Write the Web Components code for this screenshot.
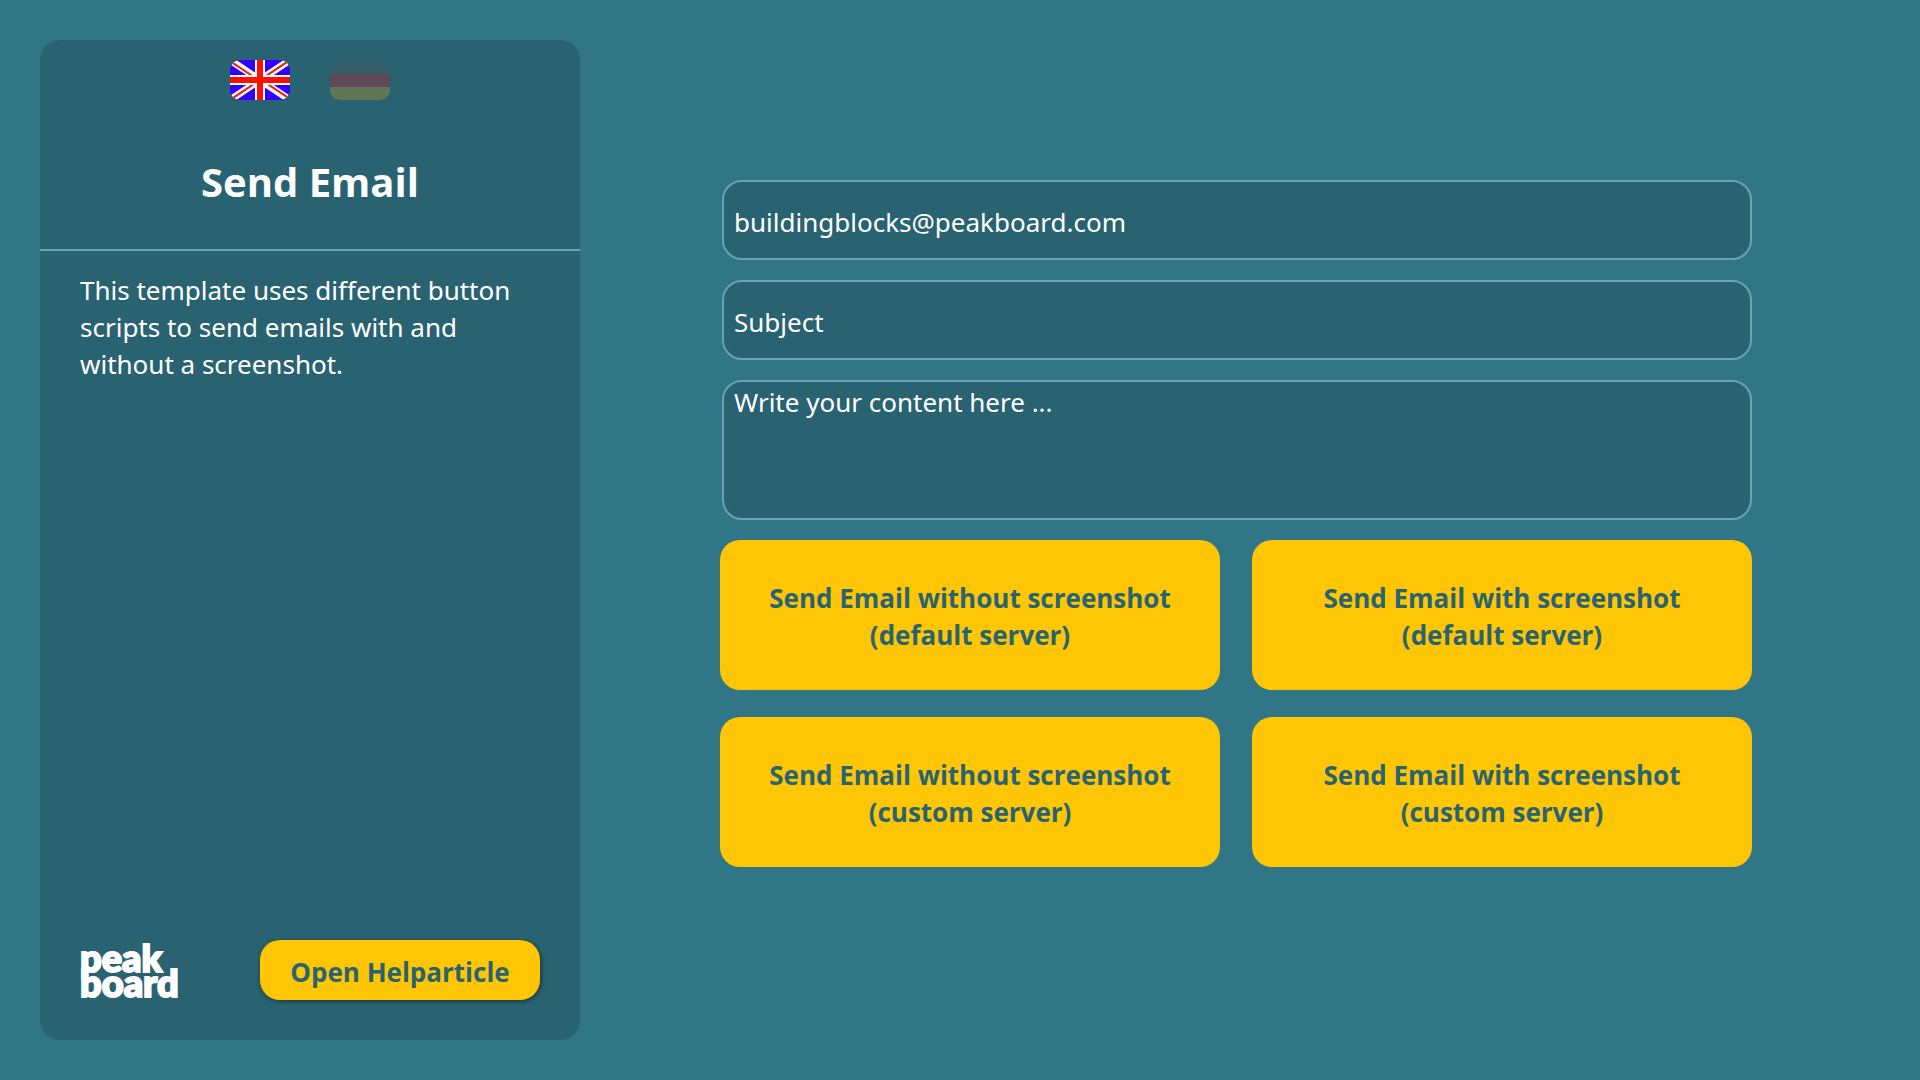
<!DOCTYPE html>
<html lang="en">
<head>
<meta charset="utf-8">
<title>Send Email</title>
<style>
  :root {
    --page: #317686;
    --surface: #296371;
    --line: #66a3b3;
    --accent: #ffc605;
    --radius: 20px;
    --text: 26px;
    --leading: 37px;
    --copy: "Noto Sans", "Open Sans", sans-serif;
  }
  * { box-sizing: border-box; }
  body {
    margin: 0;
    min-height: 100vh;
    display: flex;
    background: var(--page);
    color: #fff;
    font-family: "Open Sans", "Noto Sans", sans-serif;
    font-size: var(--text);
    line-height: var(--leading);
  }
</style>
</head>
<body>
<email-app></email-app>

<script>
const define = (name, html, setup) => {
  const template = document.createElement('template');
  template.innerHTML = '<style>*{box-sizing:border-box}</style>' + html;
  customElements.define(name, class extends HTMLElement {
    connectedCallback() {
      if (this.shadowRoot) return;
      this.attachShadow({ mode: 'open', delegatesFocus: true }).append(template.content.cloneNode(true));
      if (setup) setup(this, this.shadowRoot);
    }
  });
};

define('action-button', `
  <style>
    :host { display: grid; }
    button {
      border: 0; border-radius: var(--radius); background: var(--accent); color: var(--surface);
      font: inherit; font-weight: 700; text-align: center; cursor: pointer;
      padding: 4px 24px 0; min-height: 150px;
    }
    :host([compact]) button { min-height: 60px; box-shadow: 1px 1px 5px rgba(0,0,0,.5); }
  </style>
  <button type="button"><slot></slot></button>`);

define('text-field', `
  <style>
    :host { display: grid; font-family: var(--copy); }
    input {
      width: 100%; height: 80px; margin: 0; padding: 3px 10px 0; outline: 0;
      border: 2px solid var(--line); border-radius: var(--radius);
      background: var(--surface); color: inherit; font: inherit;
    }
  </style>
  <input type="text">`, (host, root) => {
    const input = root.querySelector('input');
    input.value = host.getAttribute('value');
    input.setAttribute('aria-label', host.getAttribute('label'));
  });

define('text-block', `
  <style>
    :host { display: grid; font-family: var(--copy); }
    textarea {
      width: 100%; height: 140px; margin: 0; padding: 2px 10px; outline: 0; resize: none;
      border: 2px solid var(--line); border-radius: var(--radius);
      background: var(--surface); color: inherit; font: inherit;
    }
  </style>
  <textarea></textarea>`, (host, root) => {
    const area = root.querySelector('textarea');
    area.value = host.getAttribute('value');
    area.setAttribute('aria-label', host.getAttribute('label'));
  });

define('language-button', `
  <style>
    :host { display: block; }
    button {
      display: block; width: 60px; height: 40px; padding: 0; border: 0; border-radius: 10px;
      overflow: hidden; background: none; cursor: pointer;
    }
    :host([inactive]) button { opacity: .25; }
  </style>
  <button type="button"><slot></slot></button>`, (host, root) => {
    const button = root.querySelector('button');
    button.setAttribute('aria-label', host.getAttribute('label'));
    button.setAttribute('aria-pressed', String(!host.hasAttribute('inactive')));
  });

define('flag-uk', `
  <style>:host, svg { display: block; }</style>
  <svg width="60" height="40" viewBox="0 0 60 40" aria-hidden="true">
    <path fill="#30f" d="M0 0h60v40H0z"/>
    <path stroke="#fff" stroke-width="7" d="M0 0l60 40M60 0L0 40"/>
    <path stroke="#ff1000" stroke-width="2" d="M0 1l30 20M60 0L30 20M60 39L30 19M0 40l30-20"/>
    <path fill="#fff" d="M25 0h10v40H25zM0 15h60v10H0z"/>
    <path fill="#ff1000" d="M27 0h6v40h-6zM0 17h60v6H0z"/>
  </svg>`);

define('flag-de', `
  <style>:host, svg { display: block; }</style>
  <svg width="60" height="40" viewBox="0 0 60 40" aria-hidden="true">
    <path fill="#54545c" d="M0 0h60v14H0z"/>
    <path fill="#ff0008" d="M0 13.5h60v13.5H0z"/>
    <path fill="#ffb400" d="M0 27h60v13H0z"/>
  </svg>`);

define('brand-logo', `
  <style>
    :host {
      display: block; font: 900 38px/25px Lato, sans-serif; color: #fff;
      -webkit-text-stroke: 2px #fff;
    }
    span { display: block; }
  </style>
  <span>peak</span><span>board</span>`);

define('side-panel', `
  <style>
    :host {
      display: flex; flex-direction: column; background: var(--surface); border-radius: var(--radius);
    }
    header {
      display: flex; flex-direction: column; align-items: center; gap: 54px;
      padding: 20px 40px 40px; border-bottom: 2px solid var(--line);
    }
    nav { display: flex; gap: 40px; }
    h1 { margin: 0; font-size: 40px; line-height: 55px; font-weight: 700; }
    p { margin: 0; padding: 21px 40px; flex: 1; font-family: var(--copy); }
    footer { display: flex; justify-content: space-between; align-items: center; padding: 0 40px 40px; }
    action-button { width: 280px; }
  </style>
  <header>
    <nav aria-label="Language">
      <language-button label="English"><flag-uk></flag-uk></language-button>
      <language-button label="Deutsch" inactive><flag-de></flag-de></language-button>
    </nav>
    <h1>Send Email</h1>
  </header>
  <p><slot></slot></p>
  <footer>
    <brand-logo></brand-logo>
    <action-button compact>Open Helparticle</action-button>
  </footer>`);

define('email-form', `
  <style>
    :host { display: block; }
    form { display: grid; gap: 20px; }
    .fields { display: grid; gap: 20px; padding-left: 2px; }
    .actions { display: grid; grid-template-columns: 1fr 1fr; gap: 27px 32px; }
  </style>
  <form>
    <div class="fields">
      <text-field label="Recipient" value="buildingblocks@peakboard.com"></text-field>
      <text-field label="Subject" value="Subject"></text-field>
      <text-block label="Content" value="Write your content here ..."></text-block>
    </div>
    <div class="actions">
      <action-button>Send Email without screenshot<br>(default server)</action-button>
      <action-button>Send Email with screenshot<br>(default server)</action-button>
      <action-button>Send Email without screenshot<br>(custom server)</action-button>
      <action-button>Send Email with screenshot<br>(custom server)</action-button>
    </div>
  </form>`);

define('email-app', `
  <style>
    :host { display: flex; flex: 1; padding: 40px; }
    side-panel { flex: 0 0 540px; }
    main { flex: 1; padding: 140px 128px 0 140px; }
  </style>
  <side-panel>This template uses different button scripts to send emails with and without a screenshot.</side-panel>
  <main><email-form></email-form></main>`);
</script>
</body>
</html>
